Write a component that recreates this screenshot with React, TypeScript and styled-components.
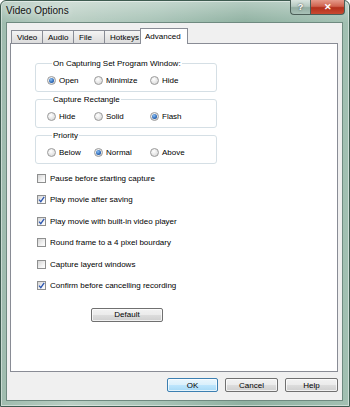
import { FC } from "react";
import styled, { createGlobalStyle, css } from "styled-components";

const Global = createGlobalStyle`
  html, body { margin: 0; padding: 0; }
  body {
    width: 350px;
    height: 407px;
    overflow: hidden;
    font-family: "Liberation Sans", Arial, sans-serif;
    font-size: 8px;
    color: #000;
  }
`;

const Frame = styled.div`
  width: 350px;
  height: 407px;
  box-sizing: border-box;
  display: flex;
  flex-direction: column;
  border: 1px solid #3e5b50;
  border-radius: 6px 6px 0 0;
  background:
    linear-gradient(180deg, rgba(255,255,255,0.35) 0px, rgba(255,255,255,0) 22px),
    linear-gradient(90deg, #9fbcae 0%, #b9cec3 20%, #a7c3b6 45%, #8fb1a1 70%, #a2c0b2 100%);
  box-shadow: inset 0 0 0 1px rgba(255,255,255,0.45);
`;

const TitleBar = styled.div`
  height: 21px;
  display: flex;
  align-items: flex-start;
  padding-left: 5px;
`;

const Title = styled.span`
  font-size: 10px;
  line-height: 20px;
  color: #111;
  text-shadow: 0 0 6px rgba(255,255,255,0.9);
`;

const Controls = styled.div`
  margin-left: auto;
  margin-right: 4px;
  margin-top: -1px;
  display: flex;
`;

const CapButton = styled.div<{ $close?: boolean }>`
  height: 15px;
  width: ${(p) => (p.$close ? 35 : 20)}px;
  box-sizing: border-box;
  display: flex;
  align-items: center;
  justify-content: center;
  color: #fff;
  font-size: 9px;
  font-weight: bold;
  border: 1px solid #4b5e58;
  border-top: none;
  ${(p) =>
    p.$close
      ? css`
          border-radius: 0 0 4px 0;
          background: linear-gradient(180deg, #e59a8a 0%, #d0634f 45%, #b3301c 55%, #c94a30 100%);
        `
      : css`
          border-right: none;
          border-radius: 0 0 0 4px;
          background: linear-gradient(180deg, #d9e4df 0%, #b6c9c1 45%, #93ada2 55%, #a9c1b7 100%);
          text-shadow: 0 0 2px #333;
        `}
`;

const Client = styled.div`
  flex: 1;
  margin: 0 6px 5px 5px;
  background: #f0f0f0;
  border: 1px solid #6f8a80;
  display: flex;
  flex-direction: column;
`;

const TabBar = styled.div`
  display: flex;
  align-items: flex-end;
  margin: 4px 0 0 4px;
  height: 16px;
`;

const Tab = styled.div<{ $active?: boolean; $w: number }>`
  width: ${(p) => p.$w}px;
  box-sizing: border-box;
  border: 1px solid #898c95;
  border-bottom: none;
  margin-right: -1px;
  font-size: 8px;
  display: flex;
  align-items: center;
  padding-left: 5px;
  ${(p) =>
    p.$active
      ? css`
          height: 16px;
          margin-bottom: -1px;
          background: #fff;
          position: relative;
          z-index: 1;
          padding-left: 4px;
        `
      : css`
          height: 13px;
          background: linear-gradient(180deg, #f4f4f4 0%, #e8e8e8 50%, #dcdcdc 100%);
        `}
`;

const Panel = styled.div`
  height: 329px;
  margin: 0 4px 0 3px;
  background: #fff;
  border: 1px solid #898c95;
  padding: 15px 0 0 24px;
  box-sizing: border-box;
`;

const Column = styled.div`
  width: 182px;
  display: flex;
  flex-direction: column;
`;

const Group = styled.fieldset`
  margin: 0 0 3px;
  padding: 7px 0 5px 11px;
  border: 1px solid #d5dfe5;
  border-radius: 3px;
  display: grid;
  grid-template-columns: 47px 56px auto;
  min-inline-size: 0;
`;

const Legend = styled.legend`
  padding: 0 1px;
  margin-left: 5px;
  font-size: 8px;
  line-height: 9px;
`;

const Option = styled.label`
  display: flex;
  align-items: center;
  gap: 3px;
  height: 11px;
`;

const RadioDot = styled.span<{ $on?: boolean }>`
  width: 9px;
  height: 9px;
  box-sizing: border-box;
  border-radius: 50%;
  border: 1px solid #9a9a9a;
  background: radial-gradient(circle at 40% 35%, #ffffff 0%, #e6e6e6 55%, #cfcfcf 100%);
  display: flex;
  align-items: center;
  justify-content: center;
  &::after {
    content: "";
    display: ${(p) => (p.$on ? "block" : "none")};
    width: 5px;
    height: 5px;
    border-radius: 50%;
    background: radial-gradient(circle at 40% 35%, #8fc2f2 0%, #2a67b8 60%, #123f82 100%);
  }
`;

const Checks = styled.div`
  display: flex;
  flex-direction: column;
  gap: 12.4px;
  margin-top: 7px;
  padding-left: 2px;
`;

const CheckRow = styled.label`
  display: flex;
  align-items: center;
  gap: 4px;
  height: 9px;
`;

const Box = styled.span`
  width: 9px;
  height: 9px;
  box-sizing: border-box;
  border: 1px solid #8e8f8f;
  background: linear-gradient(135deg, #d4d4d4 0%, #f2f2f2 60%, #ffffff 100%);
  display: flex;
  align-items: center;
  justify-content: center;
`;

const PushButton = styled.button<{ $default?: boolean }>`
  height: 14px;
  padding: 0;
  box-sizing: border-box;
  font-family: "Liberation Sans", Arial, sans-serif;
  font-size: 8px;
  color: #000;
  border-radius: 2px;
  border: 1px solid ${(p) => (p.$default ? "#3c7fb1" : "#707070")};
  background: ${(p) =>
    p.$default
      ? "linear-gradient(180deg, #eaf6fd 0%, #d9f0fc 50%, #bee6fd 51%, #a7d9f5 100%)"
      : "linear-gradient(180deg, #f2f2f2 0%, #ebebeb 50%, #dddddd 51%, #cfcfcf 100%)"};
  box-shadow: inset 0 0 0 1px rgba(255,255,255,0.7);
`;

const DefaultWrap = styled.div`
  display: flex;
  justify-content: center;
  margin-top: 18px;
  padding-left: 2px;
`;

const Footer = styled.div`
  display: flex;
  justify-content: flex-end;
  gap: 7px;
  margin: 6px 4px 0 0;
`;

const Check: FC<{ on?: boolean }> = ({ on }) => (
  <Box>
    {on && (
      <svg width="7" height="7" viewBox="0 0 7 7">
        <path d="M1 3.6 L2.8 5.6 L6.2 0.8" fill="none" stroke="#2a55b0" strokeWidth="1.3" />
      </svg>
    )}
  </Box>
);

const radioGroups = [
  { title: "On Capturing Set Program Window:", items: ["Open", "Minimize", "Hide"], on: 0 },
  { title: "Capture Rectangle", items: ["Hide", "Solid", "Flash"], on: 2 },
  { title: "Priority", items: ["Below", "Normal", "Above"], on: 1 },
];

const checks = [
  { text: "Pause before starting capture", on: false },
  { text: "Play movie after saving", on: true },
  { text: "Play movie with built-in video player", on: true },
  { text: "Round frame to a 4 pixel bourdary", on: false },
  { text: "Capture layerd windows", on: false },
  { text: "Confirm before cancelling recording", on: true },
];

const tabs = [
  { name: "Video", w: 32 },
  { name: "Audio", w: 32 },
  { name: "File", w: 32 },
  { name: "Hotkeys", w: 37 },
  { name: "Advanced", w: 48 },
];

export default function App() {
  return (
    <>
      <Global />
      <Frame>
        <TitleBar>
          <Title>Video Options</Title>
          <Controls>
            <CapButton>?</CapButton>
            <CapButton $close>✕</CapButton>
          </Controls>
        </TitleBar>
        <Client>
          <TabBar>
            {tabs.map((t) => (
              <Tab key={t.name} $w={t.w} $active={t.name === "Advanced"}>
                {t.name}
              </Tab>
            ))}
          </TabBar>
          <Panel>
            <Column>
              {radioGroups.map((g) => (
                <Group key={g.title}>
                  <Legend>{g.title}</Legend>
                  {g.items.map((it, i) => (
                    <Option key={it}>
                      <RadioDot $on={i === g.on} />
                      {it}
                    </Option>
                  ))}
                </Group>
              ))}
              <Checks>
                {checks.map((c) => (
                  <CheckRow key={c.text}>
                    <Check on={c.on} />
                    {c.text}
                  </CheckRow>
                ))}
              </Checks>
              <DefaultWrap>
                <PushButton style={{ width: 72 }}>Default</PushButton>
              </DefaultWrap>
            </Column>
          </Panel>
          <Footer>
            <PushButton $default style={{ width: 51 }}>OK</PushButton>
            <PushButton style={{ width: 53 }}>Cancel</PushButton>
            <PushButton style={{ width: 53 }}>Help</PushButton>
          </Footer>
        </Client>
      </Frame>
    </>
  );
}
